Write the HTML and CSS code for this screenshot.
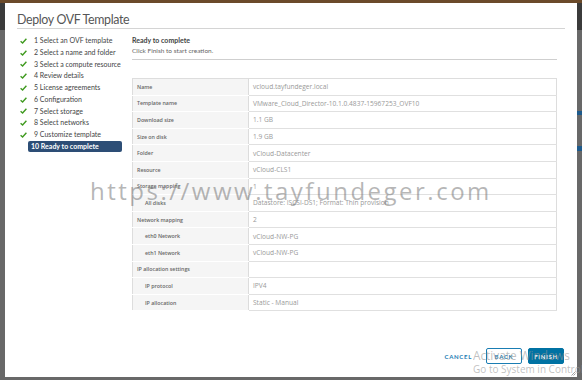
FILE: index.html
```html
<!DOCTYPE html>
<html>
<head>
<meta charset="utf-8">
<link rel="stylesheet" href="styles.css">
</head>
<body>
<div class="page">
  <div class="strip strip-left"></div>
  <div class="dialog">
    <div class="header"><h1 class="title">Deploy OVF Template</h1></div>
    <div class="main">
      <ul class="steps">
        <li class="step done"><span class="check"><svg width="7" height="6" viewBox="0 0 7 6"><path d="M0.6 3.2 L2.6 5 L6.4 0.8" fill="none" stroke="#3f9a1f" stroke-width="1.4"/></svg></span>1 Select an OVF template</li>
        <li class="step done"><span class="check"><svg width="7" height="6" viewBox="0 0 7 6"><path d="M0.6 3.2 L2.6 5 L6.4 0.8" fill="none" stroke="#3f9a1f" stroke-width="1.4"/></svg></span>2 Select a name and folder</li>
        <li class="step done"><span class="check"><svg width="7" height="6" viewBox="0 0 7 6"><path d="M0.6 3.2 L2.6 5 L6.4 0.8" fill="none" stroke="#3f9a1f" stroke-width="1.4"/></svg></span>3 Select a compute resource</li>
        <li class="step done"><span class="check"><svg width="7" height="6" viewBox="0 0 7 6"><path d="M0.6 3.2 L2.6 5 L6.4 0.8" fill="none" stroke="#3f9a1f" stroke-width="1.4"/></svg></span>4 Review details</li>
        <li class="step done"><span class="check"><svg width="7" height="6" viewBox="0 0 7 6"><path d="M0.6 3.2 L2.6 5 L6.4 0.8" fill="none" stroke="#3f9a1f" stroke-width="1.4"/></svg></span>5 License agreements</li>
        <li class="step done"><span class="check"><svg width="7" height="6" viewBox="0 0 7 6"><path d="M0.6 3.2 L2.6 5 L6.4 0.8" fill="none" stroke="#3f9a1f" stroke-width="1.4"/></svg></span>6 Configuration</li>
        <li class="step done"><span class="check"><svg width="7" height="6" viewBox="0 0 7 6"><path d="M0.6 3.2 L2.6 5 L6.4 0.8" fill="none" stroke="#3f9a1f" stroke-width="1.4"/></svg></span>7 Select storage</li>
        <li class="step done"><span class="check"><svg width="7" height="6" viewBox="0 0 7 6"><path d="M0.6 3.2 L2.6 5 L6.4 0.8" fill="none" stroke="#3f9a1f" stroke-width="1.4"/></svg></span>8 Select networks</li>
        <li class="step done"><span class="check"><svg width="7" height="6" viewBox="0 0 7 6"><path d="M0.6 3.2 L2.6 5 L6.4 0.8" fill="none" stroke="#3f9a1f" stroke-width="1.4"/></svg></span>9 Customize template</li>
        <li class="step current"><span class="current-box">10 Ready to complete</span></li>
      </ul>
      <div class="content">
        <div class="content-head">
          <div class="content-title">Ready to complete</div>
          <div class="content-sub">Click Finish to start creation.</div>
        </div>
        <table class="summary">
          <tr><td class="k">Name</td><td class="v">vcloud.tayfundeger.local</td></tr>
          <tr><td class="k">Template name</td><td class="v">VMware_Cloud_Director-10.1.0.4837-15967253_OVF10</td></tr>
          <tr><td class="k">Download size</td><td class="v">1.1 GB</td></tr>
          <tr><td class="k">Size on disk</td><td class="v">1.9 GB</td></tr>
          <tr><td class="k">Folder</td><td class="v">vCloud-Datacenter</td></tr>
          <tr><td class="k">Resource</td><td class="v">vCloud-CLS1</td></tr>
          <tr><td class="k">Storage mapping</td><td class="v">1</td></tr>
          <tr><td class="k sub">All disks</td><td class="v">Datastore: ISCSI-DS1; Format: Thin provision</td></tr>
          <tr><td class="k">Network mapping</td><td class="v">2</td></tr>
          <tr><td class="k sub">eth0 Network</td><td class="v">vCloud-NW-PG</td></tr>
          <tr><td class="k sub">eth1 Network</td><td class="v">vCloud-NW-PG</td></tr>
          <tr><td class="k">IP allocation settings</td><td class="v"></td></tr>
          <tr><td class="k sub">IP protocol</td><td class="v">IPV4</td></tr>
          <tr><td class="k sub">IP allocation</td><td class="v">Static - Manual</td></tr>
        </table>
      </div>
    </div>
    <div class="footer">
      <button class="btn btn-link">CANCEL</button>
      <button class="btn btn-outline">BACK</button>
      <button class="btn btn-primary">FINISH</button>
    </div>
    <svg class="resize" width="5" height="5" viewBox="0 0 5 5"><path d="M4.5 0.5 L0.5 4.5 M4.5 2.5 L2.5 4.5" stroke="#888" stroke-width="0.8"/></svg>
  </div>
  <div class="strip strip-right"></div>
</div>
<div class="watermark">https://www.tayfundeger.com</div>
<div class="activate">
  <div class="act-1">Activate Windows</div>
  <div class="act-2">Go to System in Control Panel to activate Windows.</div>
</div>
</body>
</html>
```

FILE: styles.css
```css
html, body {
  margin: 0;
  padding: 0;
}
body {
  width: 582px;
  height: 380px;
  overflow: hidden;
  position: relative;
  font-family: Lato, "Noto Sans", sans-serif;
  background: #676767;
}
.page {
  display: flex;
  height: 380px;
  background: linear-gradient(to bottom, #6b4a2a 0 3px, #3b3b3b 3px 30px, #686868 30px);
}
.strip-left {
  width: 5px;
  flex: none;
}
.strip-right {
  flex: 1;
  background: linear-gradient(to bottom, #6b4a2a 0 3px, #3b3b3b 3px 30px, #686868 30px 111px, #1e5b8c 111px 115px, #686868 115px 146px, #1e5b8c 146px 151px, #686868 151px);
}
.dialog {
  position: relative;
  width: 572px;
  height: 374px;
  margin-top: 3px;
  background: #fff;
  display: flex;
  flex-direction: column;
  box-sizing: border-box;
}
.header {
  padding: 8px 12px 0 12px;
}
.title {
  margin: 0;
  font-family: Lato, sans-serif;
  font-weight: 400;
  font-size: 12.4px;
  letter-spacing: -0.35px;
  line-height: 17px;
  color: #565656;
  border-bottom: 1px solid #d4d4d4;
}
.main {
  display: flex;
  padding: 6px 20px 0 12px;
}
.steps {
  list-style: none;
  margin: 0;
  padding: 0;
  width: 105px;
  flex: none;
}
.step {
  height: 11.75px;
  line-height: 11.75px;
  font-size: 7px;
  color: #444;
  display: flex;
  align-items: center;
  white-space: nowrap;
}
.check {
  display: inline-flex;
  width: 7px;
  margin: 0 7px 0 3px;
}
.current-box {
  margin-left: 11px;
  width: 94px;
  height: 11px;
  line-height: 11px;
  padding-left: 3px;
  box-sizing: border-box;
  border-radius: 2px;
  background: #2d4e76;
  color: #fff;
  font-weight: 700;
}
.content {
  margin-left: 10px;
  width: 425px;
}
.content-head {
  border-bottom: 1px solid #cfcfcf;
  padding-bottom: 3px;
}
.content-title {
  font-size: 7px;
  line-height: 11px;
  font-weight: 700;
  color: #444;
}
.content-sub {
  font-size: 6.5px;
  line-height: 10px;
  color: #666;
}
.summary {
  margin-top: 18px;
  width: 425px;
  border-collapse: collapse;
  table-layout: fixed;
  border: 1px solid #dddddd;
}
.summary tr {
  height: 16.6px;
}
.summary td {
  padding: 0 4px;
  white-space: nowrap;
  overflow: hidden;
}
.k {
  width: 107px;
  background: #f5f5f5;
  border-bottom: 1px solid #fff;
  font-family: "Open Sans", sans-serif;
  font-size: 5.3px;
  font-weight: 600;
  color: #666;
  border-right: 1px solid #dcdcdc;
}
.k.sub {
  padding-left: 12px;
}
.v {
  border-bottom: 1px solid #e0e0e0;
  font-family: "Open Sans", sans-serif;
  font-size: 6.6px;
  color: #999;
}
.footer {
  margin-top: auto;
  display: flex;
  justify-content: flex-end;
  align-items: center;
  gap: 6px;
  padding: 0 13px 13px 0;
}
.btn {
  font-family: Lato, sans-serif;
  font-size: 6px;
  font-weight: 700;
  letter-spacing: 0.7px;
  height: 16px;
  padding: 0;
  border-radius: 2px;
  cursor: pointer;
}
.btn-link {
  background: none;
  border: none;
  color: #1a7db3;
  margin-right: 8px;
}
.btn-outline {
  width: 36px;
  background: #fff;
  border: 1px solid #1a7db3;
  color: #1a7db3;
}
.btn-primary {
  width: 36px;
  background: #0072a3;
  border: 1px solid #0072a3;
  color: #fff;
}
.resize {
  position: absolute;
  right: 1px;
  bottom: 1px;
}
.watermark {
  position: absolute;
  left: 90px;
  top: 175px;
  font-family: "Open Sans", sans-serif;
  font-size: 24px;
  line-height: 32px;
  letter-spacing: 2.5px;
  color: rgba(110, 110, 110, 0.5);
  white-space: nowrap;
  pointer-events: none;
}
.activate {
  position: absolute;
  left: 473px;
  top: 347px;
  width: 109px;
  overflow: hidden;
  font-family: "Open Sans", sans-serif;
  color: rgba(150, 150, 150, 0.6);
  white-space: nowrap;
  pointer-events: none;
}
.act-1 {
  font-size: 11.8px;
  line-height: 16px;
}
.act-2 {
  font-size: 10px;
  line-height: 13px;
}
```
